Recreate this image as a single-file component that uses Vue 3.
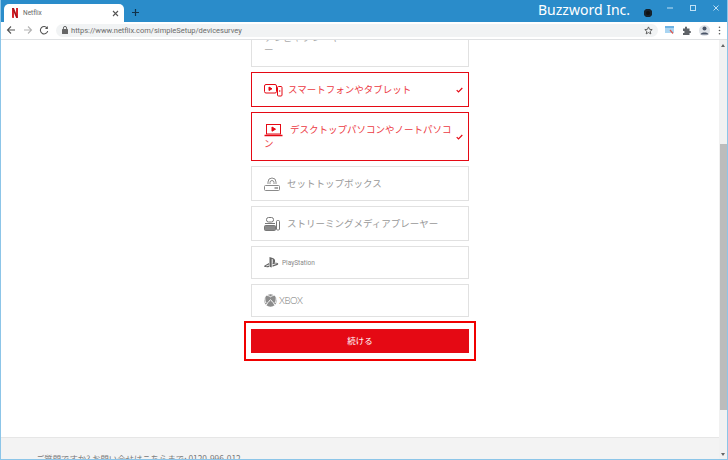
<script setup>
const tabTitle = 'Netflix'
const url = 'https://www.netflix.com/simpleSetup/devicesurvey'
</script>

<template>
  <div class="win">
    <header class="titlebar">
      <div class="tab">
        <svg class="favicon" width="6" height="10" viewBox="0 0 8 11" preserveAspectRatio="none"><path fill="#d81f26" d="M0 0h2.600v11L0 10.600zM5.400 0H8v10.600L5.400 11z"/><path fill="#a5141b" d="M0 0h2.600l5.400 11-2.600-.2z"/></svg>
        <span class="tab-title">{{ tabTitle }}</span>
        <svg class="tab-close" width="7" height="7" viewBox="0 0 7 7"><path d="M1 1l5 5M6 1L1 6" stroke="#555" stroke-width="1.100"/></svg>
      </div>
      <svg class="plus" width="9" height="9" viewBox="0 0 9 9"><path d="M4.500 1v7M1 4.500h7" stroke="#12324a" stroke-width="1.200"/></svg>
      <span class="brand">Buzzword Inc.</span>
      <span class="rec"></span>
      <div class="controls">
        <svg width="8" height="8" viewBox="0 0 8 8"><path d="M1 4h6" stroke="#bfe0f5"/></svg>
        <svg width="8" height="8" viewBox="0 0 8 8"><rect x="1.500" y="1.500" width="5" height="5" fill="none" stroke="#bfe0f5"/></svg>
        <svg width="8" height="8" viewBox="0 0 8 8"><path d="M1.500 1.500l5 5M6.500 1.500l-5 5" stroke="#bfe0f5"/></svg>
      </div>
    </header>

    <nav class="toolbar">
      <svg class="nav-ico" width="10" height="10" viewBox="0 0 10 10"><path d="M9 5H1.500M5 1.500L1.500 5 5 8.500" fill="none" stroke="#555" stroke-width="1.100"/></svg>
      <svg class="nav-ico" width="10" height="10" viewBox="0 0 10 10"><path d="M1 5h7.500M5 1.500L8.500 5 5 8.500" fill="none" stroke="#b4b4b4" stroke-width="1.100"/></svg>
      <svg class="nav-ico" width="10" height="10" viewBox="0 0 10 10"><path d="M8.300 3.400A3.700 3.700 0 1 0 8.700 6" fill="none" stroke="#555" stroke-width="1.100"/><path d="M8.800 1v3H5.900z" fill="#555"/></svg>
      <div class="omnibox">
        <svg width="6" height="8" viewBox="0 0 6 8"><rect y="3" width="6" height="5" rx=".6" fill="#666"/><path d="M1.400 3.200V2a1.600 1.600 0 0 1 3.200 0v1.200" fill="none" stroke="#666"/></svg>
        <span class="url">{{ url }}</span>
        <svg class="star" width="9" height="9" viewBox="0 0 10 10"><path d="M5 1l1.200 2.700 2.900.3-2.200 1.900.7 2.900L5 7.300 2.400 8.800l.7-2.900L.9 4l2.900-.3z" fill="none" stroke="#555"/></svg>
      </div>
      <div class="ext">
        <svg width="9" height="8" viewBox="0 0 9 8"><rect width="9" height="7" fill="#a9d5f2"/><rect y="0" width="9" height="2" fill="#6db2e4"/><path d="M5 4l3 3.500" stroke="#e0584f" stroke-width="1.200"/></svg>
        <svg width="9" height="9" viewBox="0 0 9 9"><path fill="#5f6368" d="M1 2.500h2V1.600a1 1 0 0 1 2 0v.9h2.500V5h.6a1 1 0 0 1 0 2h-.6v2H1V7h.6a1 1 0 0 0 0-2H1z"/></svg>
        <span class="avatar"><svg width="9" height="9" viewBox="0 0 9 9"><circle cx="4.500" cy="2.600" r="2" fill="#4a5568"/><path d="M.6 8.400c.4-2.400 7.400-2.400 7.800 0z" fill="#4a5568"/></svg></span>
        <svg width="3" height="9" viewBox="0 0 3 9"><g fill="#555"><circle cx="1.500" cy="1.200" r=".8"/><circle cx="1.500" cy="4.500" r=".8"/><circle cx="1.500" cy="7.800" r=".8"/></g></svg>
      </div>
    </nav>

    <div class="viewport">
      <div class="page">
        <main class="main">
          <div class="list">
            <div class="item clipped">テレビやプレーヤ<br>ー</div>

            <div class="item selected">
              <svg class="icon" width="19" height="14" viewBox="0 0 19 14" fill="none" stroke="#e50914"><rect x=".5" y="1.500" width="12" height="8.500" rx="1.500"/><path d="M5 4l3 1.800L5 7.500z" fill="#e50914"/><rect x="13.500" y="3.500" width="4.500" height="9.500" rx="1"/><circle cx="15.700" cy="8" r=".8" fill="#e50914" stroke="none"/></svg>
              <span class="label">スマートフォンやタブレット</span>
              <svg class="check" width="7" height="6" viewBox="0 0 7 6"><path d="M.7 3.200L2.500 5 6.300 1" fill="none" stroke="#e50914" stroke-width="1.200"/></svg>
            </div>

            <div class="item selected">
              <svg class="icon" width="19" height="14" viewBox="0 0 19 14" fill="none" stroke="#e50914"><rect x="2.500" y="1.500" width="14" height="9.500"/><path d="M8 4l3.500 2.200L8 8.200z" fill="#e50914"/><path d="M.5 12.500h18" stroke-width="1.500"/></svg>
              <span class="label wide">デスクトップパソコンやノートパソコン</span>
              <svg class="check" width="7" height="6" viewBox="0 0 7 6"><path d="M.7 3.200L2.500 5 6.300 1" fill="none" stroke="#e50914" stroke-width="1.200"/></svg>
            </div>

            <div class="item">
              <svg class="icon" width="16" height="14" viewBox="0 0 16 14" fill="none" stroke="#8b8b8b"><rect x=".5" y="8.500" width="15" height="5" rx="1"/><path d="M4 7V5a4 4 0 0 1 8 0v2M6 7V5.500a2 2 0 0 1 4 0V7"/><path d="M10.500 11H14" stroke-width="1.500"/></svg>
              <span class="label narrow">セットトップボックス</span>
            </div>

            <div class="item">
              <svg class="icon" width="16" height="14" viewBox="0 0 16 14" fill="none" stroke="#777"><rect x="2.500" y=".5" width="7" height="4.500" rx="2"/><path d="M1 6.500h10"/><rect x=".5" y="8.500" width="11" height="5" rx="1" fill="#8a8a8a"/><rect x="12.500" y="3.500" width="3" height="9.500" rx="1"/></svg>
              <span class="label narrow">ストリーミングメディアプレーヤー</span>
            </div>

            <div class="item brand-item">
              <svg class="logo-ps" width="15" height="11" viewBox="0 0 15 11"><path fill="#666" d="M5.500 0v9.800l2.200.8V2.400c0-.4.200-.6.500-.5.400.1.500.5.500.9v3.100c1.400.7 2.400 0 2.400-1.700 0-1.800-.6-2.600-2.500-3.200C7.700.5 6.400.2 5.500 0z"/><path fill="#666" d="M8.500 8.300l3.800-1.300c.4-.2.500-.4.100-.5-.3-.1-.8-.1-1.200 0l-2.700 1V6.100c1.600-.5 3.600-.6 5 0 1.100.5 1 1.300-.1 1.800l-4.900 1.800zM.3 8.700c-.7.500-.2 1.200 1.200 1.400 1.200.2 2.500.1 3.500-.2V8.500l-1.600.6c-.5.2-1 .2-1.300.1-.3-.1-.2-.3.100-.5L5 7.600V6z"/></svg>
              <span class="ps-text">PlayStation</span>
            </div>

            <div class="item brand-item">
              <svg class="logo-xb" width="13" height="13" viewBox="0 0 13 13"><circle cx="6.500" cy="6.500" r="6.200" fill="#8c8c8c"/><path d="M6.500 2.800C5 1.800 3.800 1.400 3 1.600M6.500 2.800C8 1.800 9.200 1.400 10 1.600M6.500 5.800C4.500 7.500 2.500 10 2.400 11M6.500 5.800C8.500 7.500 10.500 10 10.600 11M1 3.500c-.5 1.500 0 4 1 5.500M12 3.500c.5 1.500 0 4-1 5.500" fill="none" stroke="#fff" stroke-width="1"/></svg>
              <span class="xb-text">XBOX</span>
            </div>
          </div>

          <div class="action">
            <button class="continue" type="button">続ける</button>
          </div>
        </main>
        <footer class="footer">ご質問ですか? お問い合せはこちらまで: 0120-996-012</footer>
      </div>
      <aside class="scrollbar">
        <span class="arrow up"></span>
        <span class="thumb"></span>
        <span class="arrow down"></span>
      </aside>
    </div>
  </div>
</template>

<style>
html, body { margin: 0; overflow: hidden; }
</style>

<style scoped>
.win {
  width: 728px;
  height: 460px;
  box-sizing: border-box;
  display: flex;
  flex-direction: column;
  overflow: hidden;
  background: #fff;
  font-family: "Noto Sans CJK JP", "Noto Sans", sans-serif;
  border-left: 1px solid #8cc5e8;
  border-right: 1px solid #8cc5e8;
  border-bottom: 1px solid #8cc5e8;
}
.titlebar {
  height: 22px;
  flex: none;
  background: #2a8cca;
  display: flex;
  align-items: flex-start;
  margin: 0 -1px;
  padding-left: 4px;
}
.tab {
  margin-top: 4px;
  width: 120px;
  height: 18px;
  background: #fff;
  border-radius: 5px 5px 0 0;
  display: flex;
  align-items: center;
  padding-left: 8px;
  box-sizing: border-box;
}
.tab-title {
  margin-left: 5px;
  font: 6.500px "Roboto", sans-serif;
  color: #666;
  flex: 1;
}
.tab-close { margin-right: 5px; }
.plus { margin: 8px 0 0 7px; }
.brand {
  margin-left: 398px;
  font: 14px/20px "Noto Sans", sans-serif;
  color: #fff;
  width: 104px;
}
.rec {
  width: 8px;
  height: 8px;
  margin: 9px 0 0 2px;
  border-radius: 50%;
  background: #111;
  box-shadow: inset 0 0 0 2px #16222c;
}
.controls {
  display: flex;
  gap: 15px;
  margin: 4px 0 0 14px;
}
.toolbar {
  height: 18px;
  flex: none;
  box-sizing: border-box;
  border-bottom: 1px solid #dfe1e3;
  display: flex;
  align-items: center;
  padding: 0 6px 1px 6px;
  margin: 0 -1px;
  background: #fff;
}
.nav-ico { margin-right: 6px; }
.nav-ico:first-child { margin-right: 7px; }
.omnibox {
  margin-left: 1px;
  width: 602px;
  height: 13px;
  box-sizing: border-box;
  border-radius: 7px;
  background: #f1f3f4;
  display: flex;
  align-items: center;
  padding: 0 5px 0 6px;
}
.url {
  margin-left: 3px;
  font: 7.500px "Roboto", sans-serif;
  color: #6b6b6b;
  flex: 1;
}
.ext {
  display: flex;
  align-items: center;
  gap: 8px;
  margin-left: 7px;
}
.avatar {
  width: 11px;
  height: 11px;
  border-radius: 50%;
  background: #dfe3e8;
  display: flex;
  align-items: center;
  justify-content: center;
}
.viewport {
  flex: 1;
  min-height: 0;
  display: flex;
}
.page {
  flex: 1;
  min-width: 0;
  display: flex;
  flex-direction: column;
}
.main {
  flex: 1;
  min-height: 0;
  overflow: hidden;
  display: flex;
  flex-direction: column;
  justify-content: flex-end;
  align-items: center;
  padding: 0 0 84px;
}
.list {
  width: 218px;
  display: flex;
  flex-direction: column;
  gap: 5px;
}
.item {
  flex: none;
  position: relative;
  box-sizing: border-box;
  border: 1px solid #e1e1e1;
  padding: 9px 16px 10px 12px;
  font-size: 9.500px;
  line-height: 14px;
  color: #999;
  display: block;
}
.clipped {
  color: #aaa;
  line-height: 12px;
  padding-bottom: 11px;
}
.selected {
  border-color: #e50914;
  color: #ec3a43;
}
.icon {
  vertical-align: top;
  margin: 1px 5px -1px 0;
}
.label.wide { margin-left: 2px; }
.label.narrow { margin-left: 2px; }
.check {
  position: absolute;
  right: 5px;
  top: 50%;
  margin-top: -3px;
}
.brand-item {
  height: 33px;
  display: flex;
  align-items: center;
  padding: 0 12px;
}
.logo-ps { margin-right: 3px; }
.ps-text {
  font: 6.500px "Roboto", sans-serif;
  color: #888;
}
.logo-xb { margin-right: 2px; }
.xb-text {
  font: 300 9.500px "Lato", sans-serif;
  letter-spacing: -.4px;
  color: #777;
}
.action {
  position: relative;
  width: 218px;
  margin-top: 12px;
}
.action::after {
  content: "";
  position: absolute;
  inset: -8px -7px;
  border: 2px solid #f00000;
  pointer-events: none;
}
.continue {
  display: block;
  width: 100%;
  height: 24px;
  border: 0;
  padding: 0 0 2px;
  background: #e50914;
  color: #fff;
  font-family: inherit;
  font-size: 8.500px;
}
.footer {
  flex: none;
  height: 22px;
  box-sizing: border-box;
  overflow: hidden;
  background: #f3f3f3;
  border-top: 1px solid #e6e6e6;
  padding: 13px 0 0 35px;
  font-size: 8.400px;
  line-height: 14px;
  color: #777;
  white-space: nowrap;
}
.scrollbar {
  flex: none;
  width: 8px;
  background: #f1f1f1;
  position: relative;
}
.thumb {
  position: absolute;
  left: 1px;
  right: 0;
  top: 104px;
  height: 266px;
  background: #bcbcbc;
}
.arrow {
  position: absolute;
  left: 2px;
  width: 0;
  height: 0;
  border-left: 2.500px solid transparent;
  border-right: 2.500px solid transparent;
}
.arrow.up { top: 4px; border-bottom: 3px solid #666; }
.arrow.down { bottom: 3px; border-top: 3px solid #666; }
</style>
